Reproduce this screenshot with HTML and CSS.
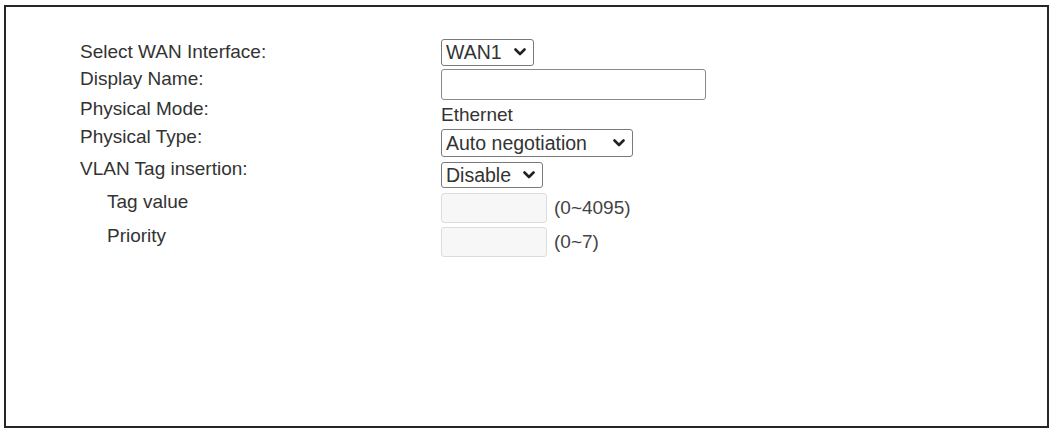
FILE: index.html
```html
<!DOCTYPE html>
<html lang="en">
<head>
<meta charset="utf-8">
<title>WAN Interface</title>
<link rel="stylesheet" href="styles.css">
</head>
<body>
<div class="frame">
  <form class="form">
    <div class="label first">Select WAN Interface:</div>
    <div class="ctrl">
      <select class="sel sel-wan"><option>WAN1</option><option>WAN2</option></select>
    </div>

    <div class="label">Display Name:</div>
    <div class="ctrl"><input class="txt txt-name" type="text"></div>

    <div class="label">Physical Mode:</div>
    <div class="ctrl value">Ethernet</div>

    <div class="label">Physical Type:</div>
    <div class="ctrl">
      <select class="sel sel-type"><option>Auto negotiation</option></select>
    </div>

    <div class="label">VLAN Tag insertion:</div>
    <div class="ctrl">
      <select class="sel sel-vlan"><option>Disable</option><option>Enable</option></select>
    </div>

    <div class="label sub">Tag value</div>
    <div class="ctrl inline"><input class="txt txt-small" type="text" disabled><span class="hint">(0~4095)</span></div>

    <div class="label sub">Priority</div>
    <div class="ctrl inline"><input class="txt txt-small" type="text" disabled><span class="hint">(0~7)</span></div>
  </form>
</div>
</body>
</html>
```
FILE: styles.css
```css
html, body {
  margin: 0;
  padding: 0;
  background: #ffffff;
}
body {
  padding: 5px 0 0 4px;
  font-family: "Liberation Sans", Arial, sans-serif;
  font-size: 19px;
  color: #333333;
}
.frame {
  box-sizing: border-box;
  width: 1045px;
  height: 423px;
  border: 2px solid #262626;
  background: #ffffff;
  padding: 30px 0 0 74px;
}
.form {
  display: grid;
  grid-template-columns: 361px auto;
  grid-template-rows: 30px 35px 25px 32px 31px 35px 34px;
  align-items: center;
  justify-items: start;
}
.label {
  padding-bottom: 12px;
  white-space: nowrap;
}
.label.first {
  padding-bottom: 1px;
}
.label.sub {
  padding-left: 27px;
}
.ctrl {
  display: flex;
  align-items: center;
}
.value {
  color: #333333;
}
.inline {
  gap: 7px;
}
.sel {
  -webkit-appearance: none;
  appearance: none;
  box-sizing: border-box;
  margin: 0;
  border: 1px solid #7a7a7a;
  border-radius: 3px;
  background-color: #ffffff;
  background-image: url("data:image/svg+xml;utf8,<svg xmlns='http://www.w3.org/2000/svg' width='12' height='8' viewBox='0 0 12 8'><path d='M1.5 1.5 L6 6 L10.5 1.5' fill='none' stroke='%23222' stroke-width='2.6' stroke-linecap='round' stroke-linejoin='round'/></svg>");
  background-repeat: no-repeat;
  background-size: 12px 8px;
  background-position: right 7px center;
  font-family: "Liberation Sans", Arial, sans-serif;
  font-size: 19.5px;
  color: #333333;
  padding: 0 0 0 4px;
}
.sel-wan {
  width: 93px;
  height: 27px;
}
.sel-type {
  width: 192px;
  height: 28px;
}
.sel-vlan {
  width: 102px;
  height: 26px;
}
.txt {
  box-sizing: border-box;
  margin: 0;
  border: 1px solid #8a8a8a;
  border-radius: 3px;
  background: #ffffff;
  font-family: "Liberation Sans", Arial, sans-serif;
  font-size: 19px;
  padding: 0 4px;
}
.txt-name {
  width: 265px;
  height: 31px;
}
.txt-small {
  width: 106px;
  height: 30px;
  background: #f7f7f7;
  border-color: #dcdcdc;
}
.hint {
  color: #444444;
}
```
